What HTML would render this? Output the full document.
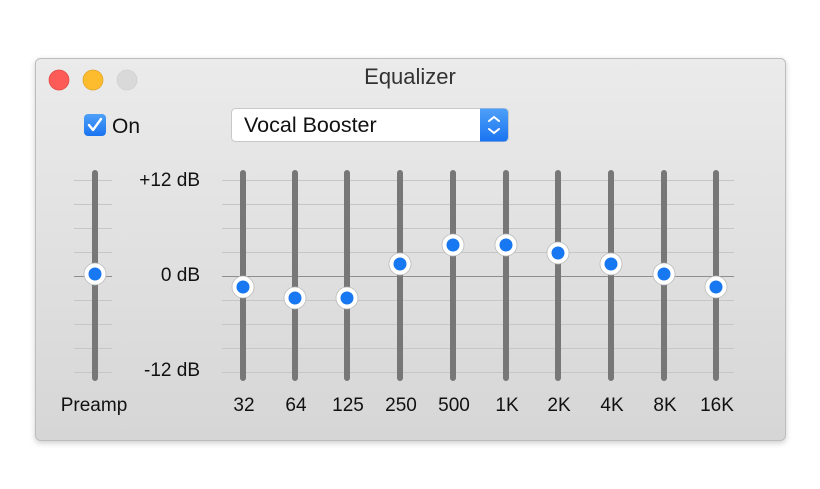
<!DOCTYPE html><html><head><style>body{margin:0;background:#fff;width:820px;height:484px;overflow:hidden}</style></head><body>
<svg width="820" height="484" xmlns="http://www.w3.org/2000/svg" font-family="Liberation Sans, sans-serif">
<defs><linearGradient id="w" x1="0" y1="0" x2="0" y2="1"><stop offset="0" stop-color="#ebebeb"/><stop offset="1" stop-color="#d6d6d6"/></linearGradient>
<linearGradient id="b" x1="0" y1="0" x2="0" y2="1"><stop offset="0" stop-color="#4ea0f8"/><stop offset="1" stop-color="#1a74f0"/></linearGradient>
<filter id="s" x="-10%" y="-10%" width="120%" height="130%"><feDropShadow dx="0" dy="2" stdDeviation="3" flood-opacity="0.2"/></filter></defs>
<rect x="35.5" y="58.5" width="750" height="382" rx="5" fill="url(#w)" stroke="#bdbdbd" filter="url(#s)"/>
<circle cx="59" cy="80" r="10" fill="#fc5b57" stroke="#e2463f" stroke-width=".7"/>
<circle cx="93" cy="80" r="10" fill="#fdbc2e" stroke="#dfa123" stroke-width=".7"/>
<circle cx="127" cy="80" r="10" fill="#d9d9d9" stroke="#cfcfcf" stroke-width=".7"/>
<text x="410" y="84" text-anchor="middle" font-size="22" fill="#333">Equalizer</text>
<rect x="84" y="114" width="22" height="22" rx="4" fill="url(#b)"/>
<path d="M89 125l4 5 8-11" stroke="#fff" stroke-width="2.4" fill="none" stroke-linecap="round" stroke-linejoin="round"/>
<text x="112" y="133" font-size="21" fill="#111">On</text>
<rect x="231.5" y="108.5" width="277" height="33" rx="4" fill="#fff" stroke="#c8c8c8"/>
<path d="M480 108.5h24a4 4 0 0 1 4 4v25a4 4 0 0 1-4 4h-24z" fill="url(#b)"/>
<path d="M489 121l5-4 5 4M489 129l5 4 5-4" stroke="#fff" stroke-width="2" fill="none" stroke-linecap="round"/>
<text x="244" y="132" font-size="21.5" fill="#111">Vocal Booster</text>
<g stroke="#c6c6c6" stroke-width="1">
<path d="M222 180.5H734M222 204.5H734M222 228.5H734M222 252.5H734M222 300.5H734M222 324.5H734M222 348.5H734M222 372.5H734"/>
<path d="M74 180.5H112M74 204.5H112M74 228.5H112M74 252.5H112M74 300.5H112M74 324.5H112M74 348.5H112M74 372.5H112"/>
</g>
<path d="M222 276.5H734M74 276.5H112" stroke="#8e8e8e"/>
<g stroke="#777" stroke-width="6" stroke-linecap="round">
<path d="M95 173V378M243 173V378M295 173V378M347 173V378M400 173V378M453 173V378M506 173V378M558 173V378M611 173V378M664 173V378M716 173V378"/>
</g>
<g font-size="19" fill="#111" text-anchor="end">
<text x="200" y="186">+12 dB</text><text x="200" y="281">0 dB</text><text x="200" y="376">-12 dB</text></g>
<g font-size="19" fill="#111" text-anchor="middle">
<text x="94" y="411">Preamp</text><text x="244" y="411">32</text><text x="296" y="411">64</text><text x="348" y="411">125</text><text x="401" y="411">250</text><text x="454" y="411">500</text><text x="507" y="411">1K</text><text x="559" y="411">2K</text><text x="612" y="411">4K</text><text x="665" y="411">8K</text><text x="717" y="411">16K</text></g>
<g stroke="#bbb" stroke-width=".8" fill="#fff">
<circle cx="95" cy="274" r="11"/><circle cx="243" cy="287" r="11"/><circle cx="295" cy="298" r="11"/><circle cx="347" cy="298" r="11"/><circle cx="400" cy="264" r="11"/><circle cx="453" cy="245" r="11"/><circle cx="506" cy="245" r="11"/><circle cx="558" cy="253" r="11"/><circle cx="611" cy="264" r="11"/><circle cx="664" cy="274" r="11"/><circle cx="716" cy="287" r="11"/></g>
<g fill="#1778f2">
<circle cx="95" cy="274" r="6.5"/><circle cx="243" cy="287" r="6.5"/><circle cx="295" cy="298" r="6.5"/><circle cx="347" cy="298" r="6.5"/><circle cx="400" cy="264" r="6.5"/><circle cx="453" cy="245" r="6.5"/><circle cx="506" cy="245" r="6.5"/><circle cx="558" cy="253" r="6.5"/><circle cx="611" cy="264" r="6.5"/><circle cx="664" cy="274" r="6.5"/><circle cx="716" cy="287" r="6.5"/></g>
</svg></body></html>
